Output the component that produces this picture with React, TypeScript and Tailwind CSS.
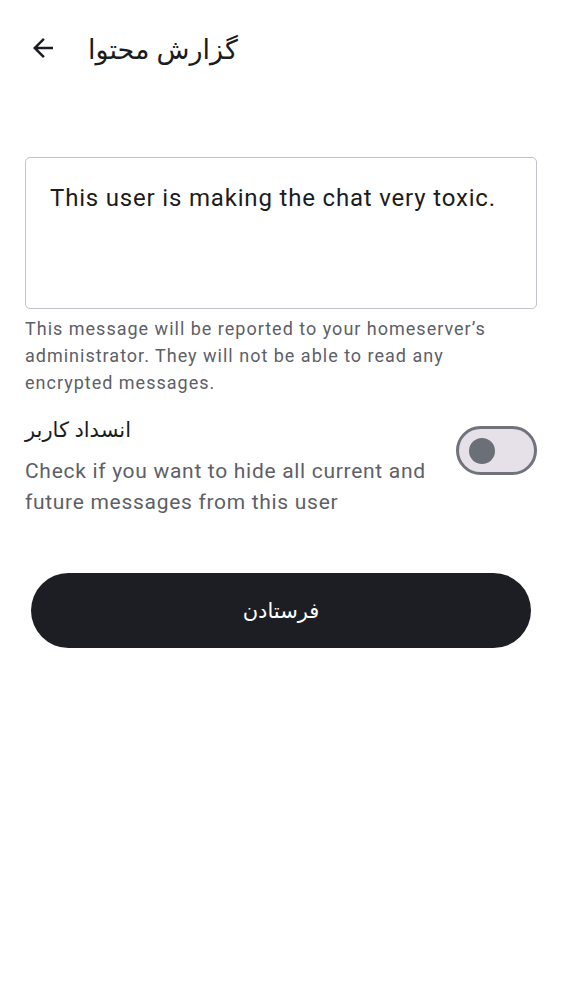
import React from "react";

export default function App() {
  return (
    <div className="w-[562px] h-[1000px] bg-white relative" style={{ fontFamily: 'Roboto, "Noto Sans", "DejaVu Sans", sans-serif' }}>
      <div className="flex items-center h-[96px] pl-[28px]">
        <svg width="30" height="30" viewBox="0 0 24 24">
          <path d="M20 11H7.83l5.59-5.59L12 4l-8 8 8 8 1.41-1.41L7.83 13H20v-2z" fill="#1b1c20" />
        </svg>
        <div className="ml-[30px] text-[27px] text-[#1b1c20] leading-none" style={{ fontFamily: '"Noto Sans", "DejaVu Sans", sans-serif' }}>گزارش محتوا</div>
      </div>
      <div className="px-[25px] pt-[61px]">
        <div className="h-[152px] border border-[#c1c4cc] rounded-[5px] px-[24px] pt-[24px]">
          <div className="text-[24px] leading-[32px] text-[#1b1c20] tracking-[0.82px]">This user is making the chat very toxic.</div>
        </div>
        <div className="mt-[6px] text-[18px] leading-[27px] tracking-[1px] text-[#5d6068] pr-[20px]">
          This message will be reported to your homeserver’s administrator. They will not be able to read any encrypted messages.
        </div>
        <div className="flex items-start mt-[19px]">
          <div className="flex-1">
            <div className="text-[21px] text-[#1b1c20] leading-[28px]" style={{ fontFamily: '"Noto Sans", "DejaVu Sans", sans-serif' }}>انسداد کاربر</div>
            <div className="text-[21px] leading-[31px] tracking-[0.7px] text-[#5d6068] mt-[13px] pr-[20px]">Check if you want to hide all current and future messages from this user</div>
          </div>
          <div className="w-[81px] h-[49px] rounded-full border-[3px] border-[#70737b] bg-[#e6e0e9] flex items-center pl-[10px] shrink-0 mt-[11px]">
            <div className="w-[26px] h-[26px] rounded-full bg-[#6b6f77]" />
          </div>
        </div>
      </div>
      <div className="px-[31px] mt-[55px]">
        <div className="h-[75px] rounded-full bg-[#1d1e23] flex items-center justify-center text-white text-[21px]" style={{ fontFamily: '"Noto Sans", "DejaVu Sans", sans-serif' }}>فرستادن</div>
      </div>
    </div>
  );
}
